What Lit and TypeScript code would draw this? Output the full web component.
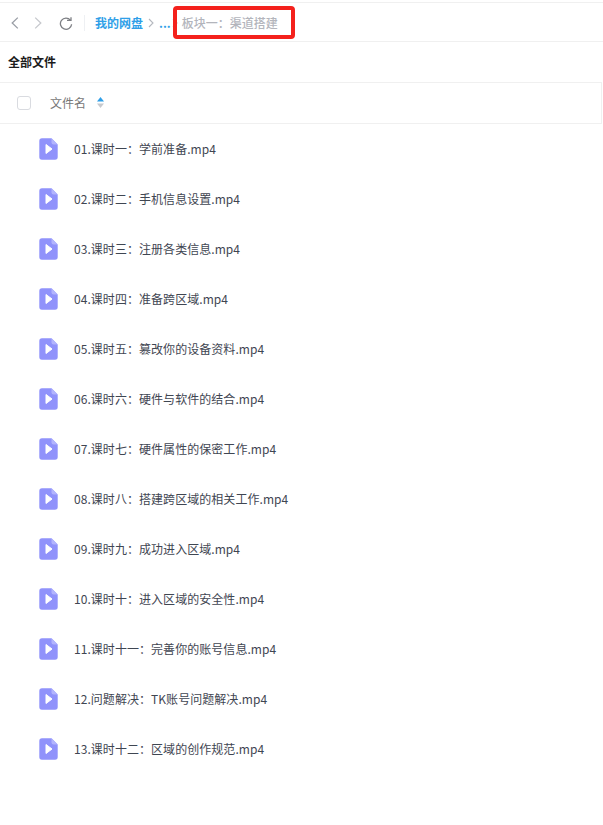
import { LitElement, html, css, svg } from "lit";
import { customElement } from "lit/decorators.js";

const files = [
  "01.课时一：学前准备.mp4",
  "02.课时二：手机信息设置.mp4",
  "03.课时三：注册各类信息.mp4",
  "04.课时四：准备跨区域.mp4",
  "05.课时五：篡改你的设备资料.mp4",
  "06.课时六：硬件与软件的结合.mp4",
  "07.课时七：硬件属性的保密工作.mp4",
  "08.课时八：搭建跨区域的相关工作.mp4",
  "09.课时九：成功进入区域.mp4",
  "10.课时十：进入区域的安全性.mp4",
  "11.课时十一：完善你的账号信息.mp4",
  "12.问题解决：TK账号问题解决.mp4",
  "13.课时十二：区域的创作规范.mp4",
];

const videoIcon = svg`<svg width="19" height="22" viewBox="0 0 19 22"><path d="M3 0.3H12.5L18.7 6.5V19a2.7 2.7 0 0 1-2.7 2.7H3A2.7 2.7 0 0 1 .3 19V3A2.7 2.7 0 0 1 3 .3Z" fill="#9092fb"/><path d="M12.5 0.3L18.7 6.5H14.5a2 2 0 0 1-2-2Z" fill="#b2b4fd"/><path d="M7 6.5L13 11L7 15.5Z" fill="#fff" stroke="#fff" stroke-width="1" stroke-linejoin="round"/></svg>`;

@customElement("app-root")
export class AppRoot extends LitElement {
  static styles = css`
    :host { display: block; width: 603px; height: 825px; background: #fff; overflow: hidden;
      font-family: "Noto Sans CJK SC", "Noto Sans", sans-serif; }
    .nav { margin-top: 2px; height: 36px; padding-top: 2px; border-top: 1px solid #f0f0f0; border-bottom: 1px solid #f0f0f0;
      display: flex; align-items: center; position: relative; }
    .navbtns { display: flex; align-items: center; padding-left: 11px; }
    .navbtns svg { display: block; }
    .back { margin-right: 15px; }
    .fwd { margin-right: 17px; }
    .sep { width: 1px; height: 16px; background: #eef0f3; margin: 0 10px 0 11px; }
    .crumbs { display: flex; align-items: center; font-size: 12px; font-weight: 700; color: #2f9fe8; line-height: 16px; }
    .chev { margin: 0 5px; display: block; }
    .chev.last { margin: 0 4px 0 1px; }
    .cur { color: #b3b5bc; font-weight: 500; }
    .highlight { position: absolute; left: 173px; top: 3px; width: 122px; height: 33px; box-sizing: border-box;
      border: 4px solid #f4211c; border-radius: 4px; }
    .title { height: 40px; box-sizing: border-box; padding: 0 0 2px 8px; display: flex; align-items: center; font-size: 12px; font-weight: 700; color: #1c1c1c; }
    .head { height: 40px; border-top: 1px solid #f0f0f0; border-bottom: 1px solid #f0f0f0; border-right: 1px solid #f0f0f0;
      margin-right: 1px; display: flex; align-items: center; padding-left: 17px; font-size: 12px; color: #777; }
    .check { width: 12px; height: 12px; border: 1px solid #d9dbe0; border-radius: 3px; margin-right: 19px; }
    .head span { margin-top: -2px; }
    .sort { margin-left: 11px; display: block; margin-top: -1px; }
    .row { height: 50px; display: flex; align-items: center; padding-left: 39px; font-size: 12px; color: #3f4652; letter-spacing: 0.05px; }
    .row svg { display: block; margin-right: 16px; }
    .row span { margin-top: -2px; }
  `;

  render() {
    return html`
      <div class="nav">
        <div class="navbtns">
          <svg class="back" width="8" height="12" viewBox="0 0 8 12"><path d="M6.8 .6L1.2 6L6.8 11.4" fill="none" stroke="#9a9ea6" stroke-width="1.3"/></svg>
          <svg class="fwd" width="8" height="12" viewBox="0 0 8 12"><path d="M1.2 .6L6.8 6L1.2 11.4" fill="none" stroke="#c6c8cd" stroke-width="1.3"/></svg>
          <svg width="14" height="13" viewBox="0 0 14 13"><path d="M11.4 3.2A5.6 5.6 0 1 0 12.6 7.2" fill="none" stroke="#7d7f84" stroke-width="1.3"/><path d="M8 3.4H12V0.2" fill="none" stroke="#7d7f84" stroke-width="1.3"/></svg>
        </div>
        <div class="sep"></div>
        <div class="crumbs">
          <span>我的网盘</span>
          <svg class="chev" width="6" height="10" viewBox="0 0 6 10"><path d="M1 1L5 5L1 9" fill="none" stroke="#b5b8bf" stroke-width="1.1"/></svg>
          <span>...</span>
          <svg class="chev last" width="6" height="10" viewBox="0 0 6 10"><path d="M1 1L5 5L1 9" fill="none" stroke="#b5b8bf" stroke-width="1.1"/></svg>
          <span class="cur">板块一：渠道搭建</span>
        </div>
        <div class="highlight"></div>
      </div>
      <div class="title">全部文件</div>
      <div class="head">
        <div class="check"></div>
        <span>文件名</span>
        <svg class="sort" width="7" height="11" viewBox="0 0 7 11"><path d="M3.5 0L7 4.5H0Z" fill="#2f9fe8"/><path d="M3.5 11L0 6.5H7Z" fill="#c6c9ce"/></svg>
      </div>
      ${files.map((f) => html`<div class="row">${videoIcon}<span>${f}</span></div>`)}
    `;
  }
}
